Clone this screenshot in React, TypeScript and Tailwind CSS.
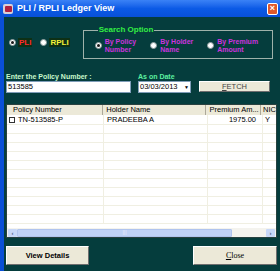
import React from "react";

const font = "font-['Liberation_Sans',Tahoma,sans-serif]";

const Radio = ({ checked }: { checked?: boolean }) => (
    <span className="flex h-[7px] w-[7px] shrink-0 items-center justify-center rounded-full border border-[#8a9a9a] bg-white">
        {checked && <span className="h-[3px] w-[3px] rounded-full bg-[#1a1a1a]" />}
    </span>
);

const Option = ({ lines, checked }: { lines: string[]; checked?: boolean }) => (
    <div className="flex items-center gap-[3px]">
        <Radio checked={checked} />
        <div className="text-[7px] font-bold leading-[8px] text-[#cc33dd]">
            {lines.map((l) => (
                <div key={l}>{l}</div>
            ))}
        </div>
    </div>
);

const rows = Array.from({ length: 11 });

const App = () => {
    return (
        <div className={`flex h-[271px] w-[280px] flex-col overflow-hidden bg-[#053d3d] ${font}`}>
            {/* title bar */}
            <div className="flex h-[17px] shrink-0 items-center bg-gradient-to-b from-[#3a82f6] via-[#0b5ae6] to-[#0850d8] pl-[3px] pr-[2px]">
                <span className="flex h-[10px] w-[10px] items-center justify-center rounded-[2px] bg-[#d8d0d8]">
                    <span className="h-[6px] w-[7px] rounded-[1px] bg-[#b02040]" />
                </span>
                <span className="ml-[4px] text-[9px] font-bold text-white">PLI / RPLI Ledger View</span>
                <span className="ml-auto flex h-[12px] w-[11px] items-center justify-center rounded-[2px] border border-white bg-[#e0582a] text-[9px] font-bold leading-none text-white">
                    ×
                </span>
            </div>

            <div className="flex flex-1">
                <div className="w-[4px] shrink-0 bg-[#0a4fd6]" />
                <div className="flex flex-1 flex-col pl-[2px]">
                    {/* row 1 */}
                    <div className="mt-[9px] flex h-[33px] items-center">
                        <div className="ml-[3px] flex items-center gap-[2px]">
                            <Radio checked />
                            <span className="bg-[#0d3016] px-[1px] text-[8px] font-bold leading-[9px] text-[#ff2a2a]">PLI</span>
                        </div>
                        <div className="ml-[8px] flex items-center gap-[2px]">
                            <Radio />
                            <span className="bg-[#0d3016] px-[1px] text-[8px] font-bold leading-[9px] text-[#f4f43a]">RPLI</span>
                        </div>
                        <fieldset className="ml-[13px] flex h-[33px] w-[190px] items-center gap-[14px] border border-[#9fb2aa] pb-[1px] pl-[11px]">
                            <legend className="ml-[3px] px-[1px] text-[8px] font-bold leading-[8px] text-[#33ee44]">Search Option</legend>
                            <Option checked lines={["By Policy", "Number"]} />
                            <Option lines={["By Holder", "Name"]} />
                            <Option lines={["By Premium", "Amount"]} />
                        </fieldset>
                    </div>

                    {/* row 2 */}
                    <div className="mt-[14px] flex items-end">
                        <div className="flex flex-col">
                            <span className="text-[7px] font-bold leading-[8px] text-[#c8f8cc]">Enter the Policy Number :</span>
                            <div className="h-[12px] w-[125px] border border-[#7f9db9] bg-white pl-[1px] text-[7.5px] leading-[10px] text-black">
                                513585
                            </div>
                        </div>
                        <div className="ml-[7px] flex flex-col">
                            <span className="text-[7px] font-bold leading-[8px] text-[#5cf0a0]">As on Date</span>
                            <div className="flex h-[12px] w-[53px] items-center justify-between border border-[#7f9db9] bg-white pl-[1px] pr-[1px] text-[7.5px] leading-[10px] text-black">
                                <span>03/03/2013</span>
                                <span className="text-[5px] leading-none">▼</span>
                            </div>
                        </div>
                        <button className="mb-[1px] ml-[8px] h-[11px] w-[71px] border border-[#6e6e6e] border-l-white border-t-white bg-[#ece9d8] text-[7.5px] leading-[9px] text-[#444]">
                            <span className="underline">F</span>ETCH
                        </button>
                    </div>

                    {/* grid */}
                    <div className="mt-[11px] flex h-[134px] w-[271px] flex-col border border-[#28413f] bg-white">
                        <div className="flex-1 overflow-hidden text-[7.5px] leading-[9px] text-black">
                            <div className="flex h-[10px] bg-[#ece9d8]">
                                <div className="w-[97px] border-r border-[#aca899] pl-[6px]">Policy Number</div>
                                <div className="w-[104px] border-r border-[#aca899] pl-[3px]">Holder Name</div>
                                <div className="w-[55px] border-r border-[#aca899] pl-[3px]">Premium Am...</div>
                                <div className="flex-1 pl-[2px]">NIC</div>
                            </div>
                            <div className="flex h-[10px] border-b border-[#f0efe2]">
                                <div className="flex w-[97px] items-center border-r border-[#f0efe2] pl-[2px]">
                                    <span className="mr-[3px] h-[6px] w-[6px] border border-[#333]" />
                                    TN-513585-P
                                </div>
                                <div className="w-[104px] border-r border-[#f0efe2] pl-[3px]">PRADEEBA A</div>
                                <div className="w-[55px] border-r border-[#f0efe2] pr-[6px] text-right">1975.00</div>
                                <div className="flex-1 pl-[2px]">Y</div>
                            </div>
                            {rows.map((_, i) => (
                                <div key={i} className="flex h-[9px] border-b border-[#f0efe2]">
                                    <div className="w-[97px] border-r border-[#f0efe2]" />
                                    <div className="w-[104px] border-r border-[#f0efe2]" />
                                    <div className="w-[55px] border-r border-[#f0efe2]" />
                                    <div className="flex-1" />
                                </div>
                            ))}
                        </div>
                        {/* scrollbar */}
                        <div className="flex h-[9px] items-center bg-[#f4f3ee] px-[1px]">
                            <span className="flex h-[8px] w-[9px] items-center justify-center rounded-[1px] bg-[#c8d8f8] text-[6px] font-bold leading-none text-[#4d6185]">‹</span>
                            <span className="flex h-[8px] w-[215px] items-center justify-center rounded-[1px] border border-[#b0c4ee] bg-[#c0d2f6] text-[5px] leading-none text-[#eef]">|||</span>
                            <span className="flex-1" />
                            <span className="flex h-[8px] w-[9px] items-center justify-center rounded-[1px] bg-[#c8d8f8] text-[6px] font-bold leading-none text-[#4d6185]">›</span>
                        </div>
                    </div>

                    {/* buttons */}
                    <div className="mt-[8px] flex w-[271px] justify-between">
                        <button className="h-[19px] w-[83px] border border-[#6e6e6e] border-l-white border-t-white bg-[#ece9d8] text-[7.5px] font-bold text-black">
                            View Details
                        </button>
                        <button className="h-[19px] w-[84px] border border-[#6e6e6e] border-l-white border-t-white bg-[#ece9d8] font-['Liberation_Serif',serif] text-[8px] text-black">
                            <span className="underline">C</span>lose
                        </button>
                    </div>
                </div>
            </div>
        </div>
    );
};

export default App;
